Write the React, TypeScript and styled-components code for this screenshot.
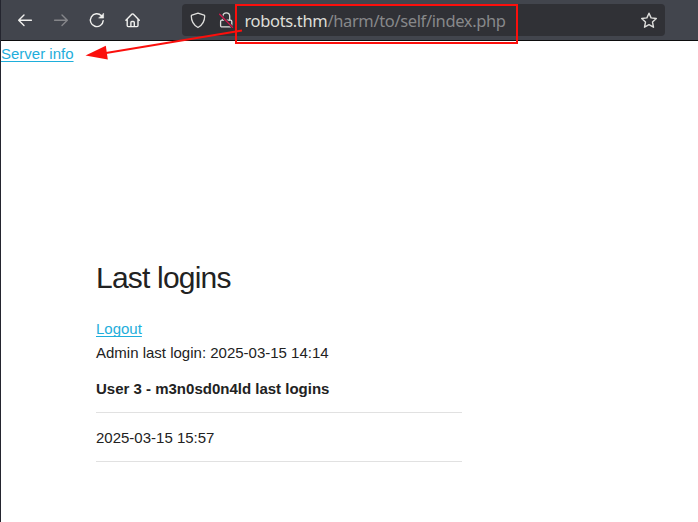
import React from "react";
import styled, { createGlobalStyle } from "styled-components";

const GlobalStyle = createGlobalStyle`
  html, body { margin: 0; padding: 0; background: #fff; overflow: hidden; }
  * { box-sizing: border-box; }
`;

const Window = styled.div`
  position: relative;
  width: 698px;
  height: 522px;
  display: flex;
  flex-direction: column;
  border-left: 1px solid #24252f;
  background: #fff;
  overflow: hidden;
`;

const Toolbar = styled.header`
  flex: none;
  height: 41px;
  padding-left: 15px;
  display: flex;
  align-items: flex-start;
  background: #42454d;
  border-bottom: 1px solid #0c0c0d;
`;

const NavButton = styled.span<{ $disabled?: boolean }>`
  width: 36px;
  height: 40px;
  display: flex;
  align-items: center;
  color: ${(p) => (p.$disabled ? "#85868a" : "#f0f0ee")};
  svg { display: block; }
`;

const UrlBar = styled.div`
  width: 483px;
  height: 32px;
  margin: 4px 0 0 22px;
  padding: 0 8px;
  display: flex;
  align-items: center;
  border-radius: 4px;
  background: #303136;
  color: #dededc;
  svg { display: block; flex: none; }
`;

const LockSlot = styled.span`
  margin: 0 8.5px 0 12px;
`;

const Address = styled.span`
  flex: 1;
  white-space: nowrap;
  font: 16.5px/32px "Noto Sans", sans-serif;
  letter-spacing: -0.36px;
  padding-top: 1px;
  color: #deded8;
`;

const Path = styled.span`
  color: #87888a;
`;

const Page = styled.main`
  flex: 1;
  padding-top: 1px;
  font: 15px/24px "Liberation Sans", Arial, sans-serif;
  color: #222;
`;

const Link = styled.a`
  color: #1eaedb;
  text-decoration: underline;
  text-decoration-thickness: 1px;
  text-decoration-skip-ink: none;
  text-underline-offset: 2px;
`;

const Container = styled.section`
  width: 366px;
  margin: 192px 0 0 95px;
`;

const Heading = styled.h4`
  margin: 0 0 20px;
  font-size: 30px;
  line-height: 39px;
  font-weight: 400;
  letter-spacing: -0.8px;
`;

const Table = styled.div`
  margin-top: -1px;
`;

const Row = styled.div<{ $bold?: boolean }>`
  padding: 13px 0 11px;
  border-bottom: 1px solid #e1e1e1;
  font-weight: ${(p) => (p.$bold ? 700 : 400)};
`;

const Annotation = styled.svg`
  position: absolute;
  top: 0;
  left: -1px;
  pointer-events: none;
`;

const Icon = ({ children }: { children: React.ReactNode }) => (
  <svg width="18" height="18" viewBox="0 0 18 18" fill="none" stroke="currentColor" strokeWidth="1.4" strokeLinecap="round" strokeLinejoin="round">
    {children}
  </svg>
);

export default function App() {
  return (
    <>
      <GlobalStyle />
      <Window>
        <Toolbar>
          <NavButton>
            <Icon><path d="M8 4 2.7 9.3 8 14.6M3 9.3h12.4" /></Icon>
          </NavButton>
          <NavButton $disabled>
            <Icon><path d="m10 4 5.3 5.3-5.3 5.3M15 9.3H2.6" /></Icon>
          </NavButton>
          <NavButton>
            <Icon>
              <path d="M13.4 4.7A6.4 6.4 0 1 0 15.2 9.6" />
              <path d="M15.6 2.5v4.6H11z" fill="currentColor" strokeWidth=".6" />
            </Icon>
          </NavButton>
          <NavButton>
            <Icon>
              <path d="M1.9 9.3 8 3.1q.6-.5 1.2 0l6.1 6.2M3.2 8.2v6.4q0 1 1 1h8.8q1 0 1-1V8.2" />
              <path d="M6.9 15.3v-3.8q0-1 1-1h1.4q1 0 1 1v3.8" />
            </Icon>
          </NavButton>
          <UrlBar>
            <svg width="16" height="18" viewBox="0 0 16 18" fill="none" stroke="currentColor" strokeWidth="1.3" strokeLinejoin="round">
              <path d="M8 2.1 14.1 4.2q.6.2.6.8c0 5.1-2.3 9.1-6.7 11.5C3.6 14.1 1.3 10.1 1.3 5q0-.6.6-.8z" />
            </svg>
            <LockSlot>
              <svg width="18" height="18" viewBox="0 0 18 18" fill="none" stroke="currentColor" strokeWidth="1.3" strokeLinecap="round">
                <path d="M4.9 9V5.2a3.4 3.4 0 0 1 6.8 0V9" />
                <rect x="2.6" y="9.2" width="11.2" height="6.7" rx="1.2" />
                <path d="m1.6 3.2 13 13.2" stroke="#303136" strokeWidth="2.6" />
                <path d="m1.6 3.2 13 13.2" stroke="#d3174c" />
              </svg>
            </LockSlot>
            <Address>robots.thm<Path>/harm/to/self/index.php</Path></Address>
            <svg width="17" height="18" viewBox="0 0 17 18" fill="none" stroke="currentColor" strokeWidth="1.4" strokeLinejoin="round">
              <path d="m9 2.2 2.1 4.7 5.2.6-3.8 3.6 1 5.1L9 13.7l-4.5 2.5 1-5.1-3.8-3.6 5.2-.6z" />
            </svg>
          </UrlBar>
        </Toolbar>
        <Page>
          <Link>Server info</Link>
          <Container>
            <Heading>Last logins</Heading>
            <Link>Logout</Link>
            <div>Admin last login: 2025-03-15 14:14</div>
            <Table>
              <Row $bold>User 3 - m3n0sd0n4ld last logins</Row>
              <Row>2025-03-15 15:57</Row>
            </Table>
          </Container>
        </Page>
        <Annotation width="698" height="70" viewBox="0 0 698 70">
          <rect x="236" y="5" width="281" height="38" fill="none" stroke="#fb0f0c" strokeWidth="2" />
          <path d="M242 30.5 106 53" stroke="#fb0f0c" strokeWidth="2" />
          <path d="m85.5 55.5 20.3-9.8 2 13.8z" fill="#fb0f0c" />
        </Annotation>
      </Window>
    </>
  );
}
